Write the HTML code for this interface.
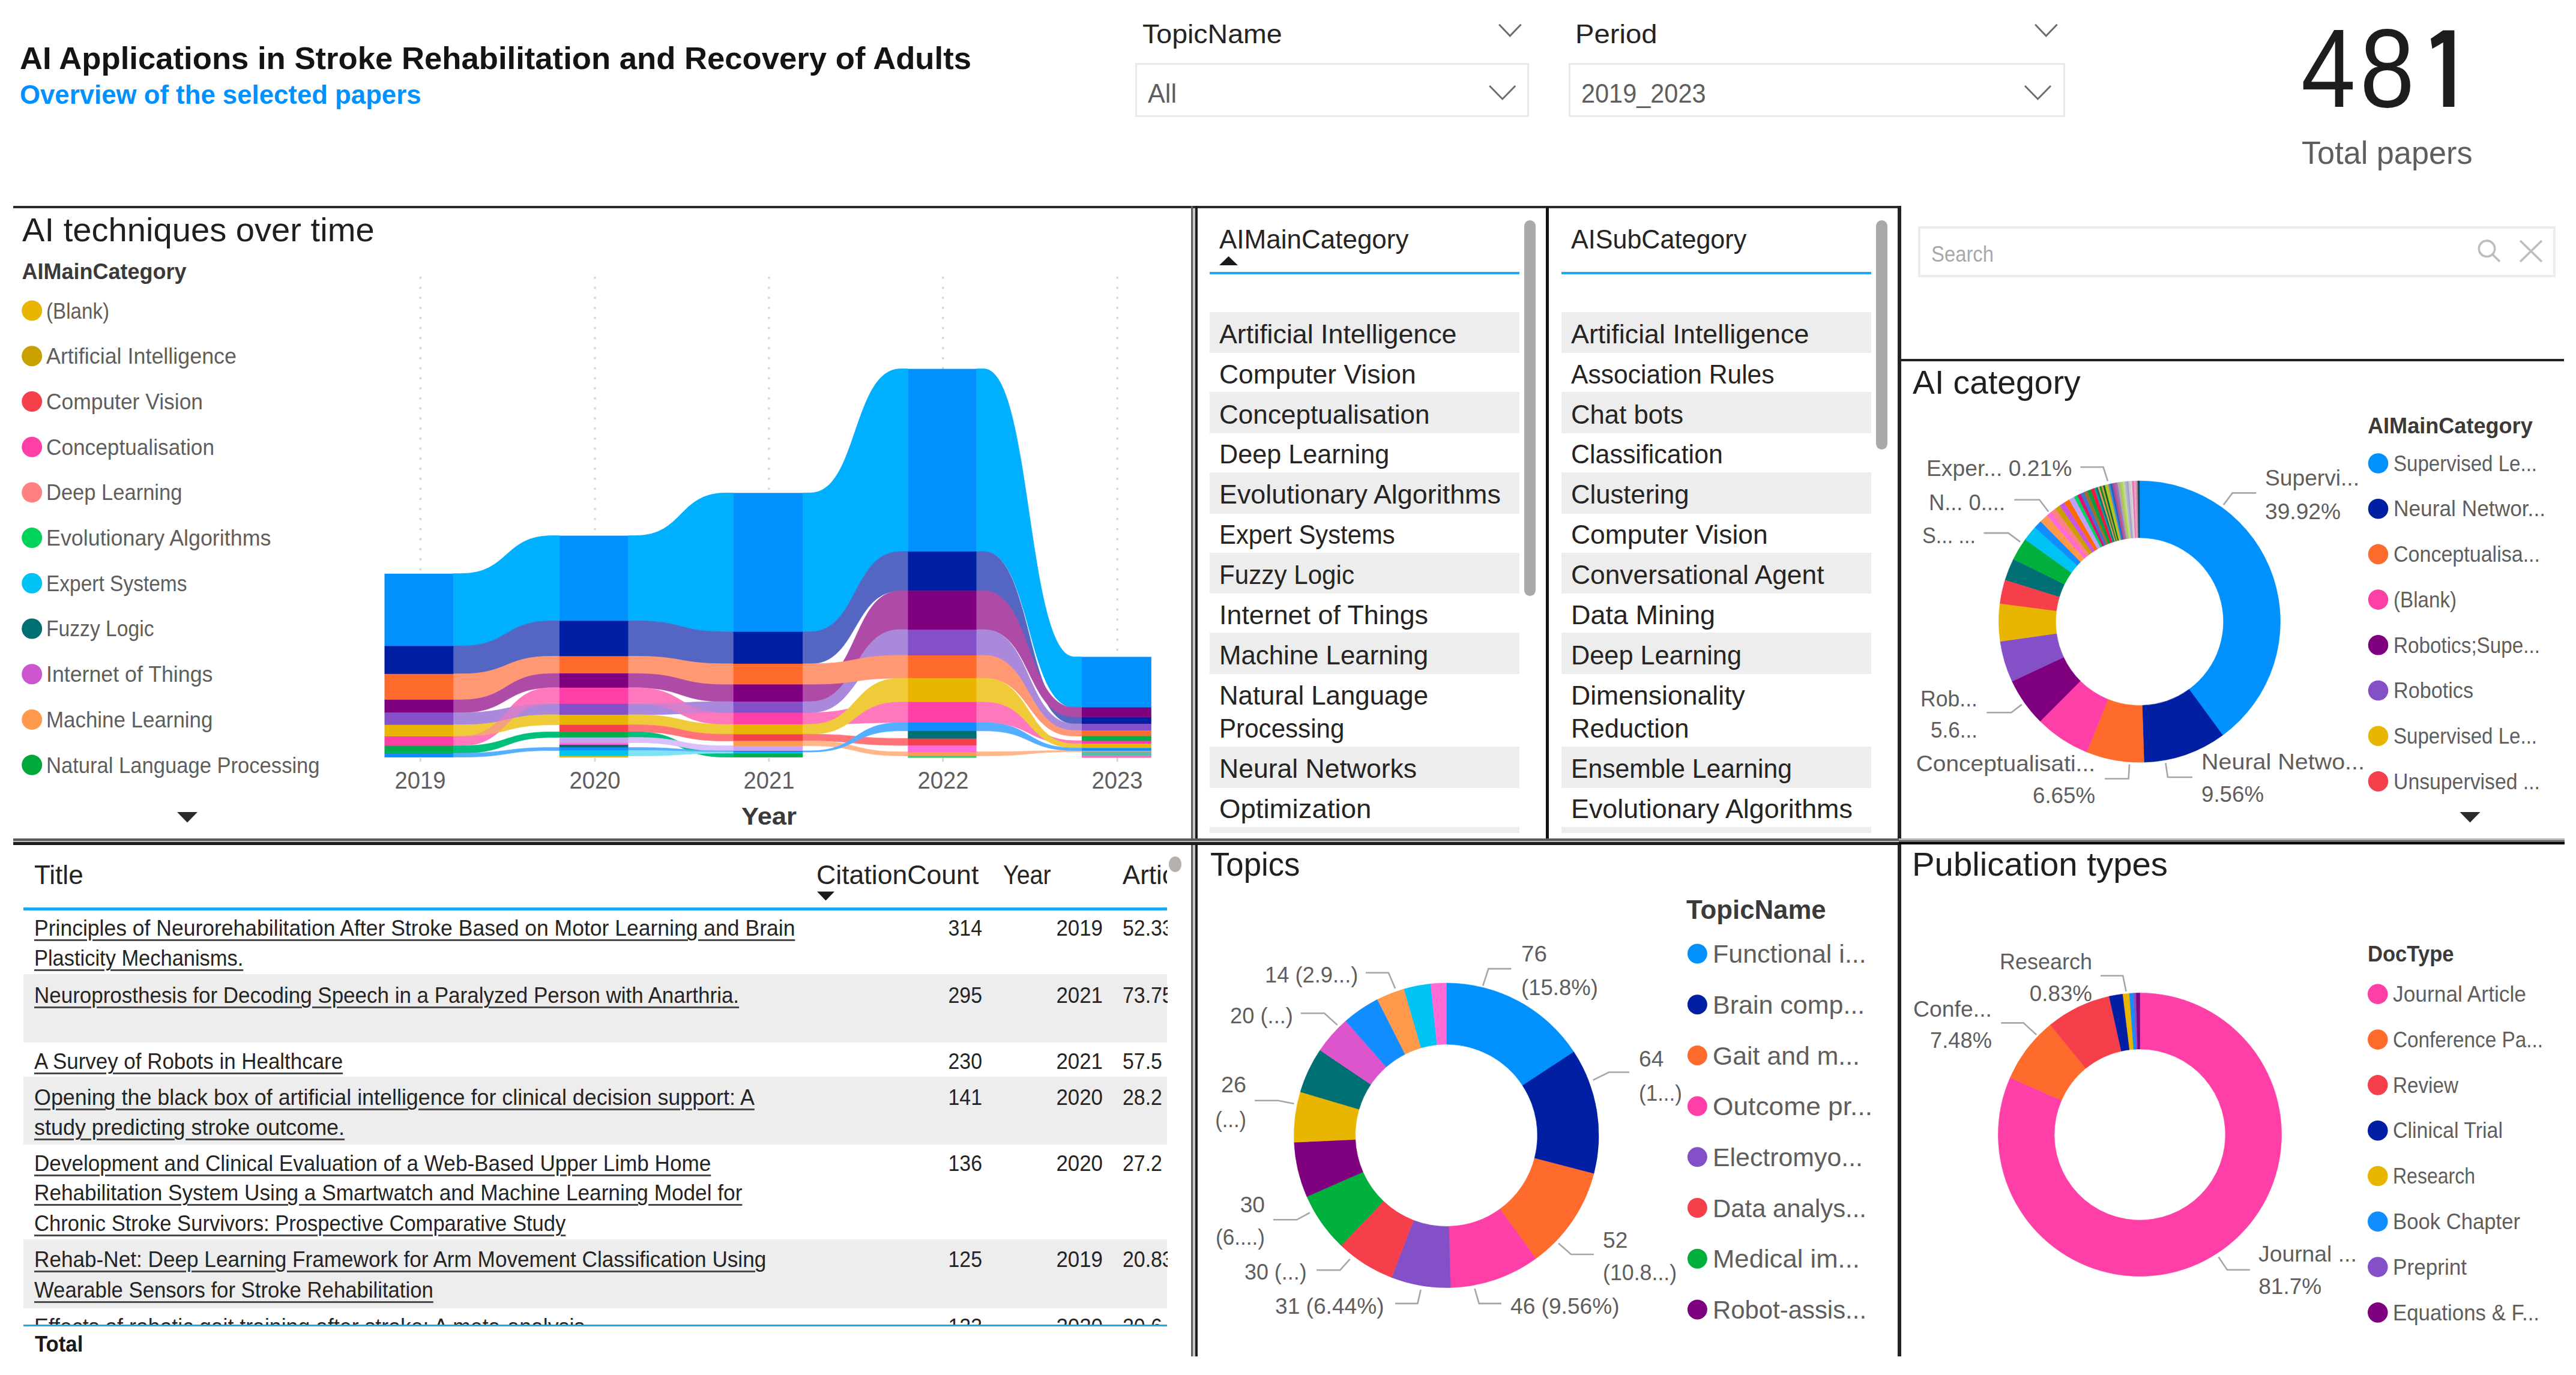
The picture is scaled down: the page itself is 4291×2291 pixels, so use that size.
<!DOCTYPE html>
<html><head><meta charset="utf-8"><title>AI Applications in Stroke Rehabilitation</title>
<style>
html,body{margin:0;padding:0;background:#fff;}
body{width:4291px;height:2291px;position:relative;overflow:hidden;font-family:"Liberation Sans",sans-serif;}
.t{position:absolute;white-space:nowrap;line-height:1;}
.r{position:absolute;}
svg{position:absolute;left:0;top:0;}
</style></head><body>
<svg width="4291" height="2291" viewBox="0 0 4291 2291">
<polyline points="2497.1,40.8 2515.3,59.8 2533.6,40.8" fill="none" stroke="#6e6c6a" stroke-width="2.9"/>
<polyline points="3390.1,40.8 3408.3,59.8 3426.6,40.8" fill="none" stroke="#6e6c6a" stroke-width="2.9"/>
<polyline points="2481.2,143.0 2502.7,165.0 2524.2,143.0" fill="none" stroke="#6e6c6a" stroke-width="2.9"/>
<polyline points="3373.0,143.0 3394.5,165.0 3416.0,143.0" fill="none" stroke="#6e6c6a" stroke-width="2.9"/>
<line x1="700.3" y1="461" x2="700.3" y2="1262" stroke="#d6d6d6" stroke-width="3.4" stroke-dasharray="3.4 13.35"/>
<line x1="700.3" y1="1263" x2="700.3" y2="1269" stroke="#d8d8d8" stroke-width="3"/>
<line x1="991" y1="461" x2="991" y2="1262" stroke="#d6d6d6" stroke-width="3.4" stroke-dasharray="3.4 13.35"/>
<line x1="991" y1="1263" x2="991" y2="1269" stroke="#d8d8d8" stroke-width="3"/>
<line x1="1280.9" y1="461" x2="1280.9" y2="1262" stroke="#d6d6d6" stroke-width="3.4" stroke-dasharray="3.4 13.35"/>
<line x1="1280.9" y1="1263" x2="1280.9" y2="1269" stroke="#d8d8d8" stroke-width="3"/>
<line x1="1570.7" y1="461" x2="1570.7" y2="1262" stroke="#d6d6d6" stroke-width="3.4" stroke-dasharray="3.4 13.35"/>
<line x1="1570.7" y1="1263" x2="1570.7" y2="1269" stroke="#d8d8d8" stroke-width="3"/>
<line x1="1861.2" y1="461" x2="1861.2" y2="1262" stroke="#d6d6d6" stroke-width="3.4" stroke-dasharray="3.4 13.35"/>
<line x1="1861.2" y1="1263" x2="1861.2" y2="1269" stroke="#d8d8d8" stroke-width="3"/>
<path d="M755.3,955.8 L767.7,955.8 C848.1,955.8 839.0,892.5 919.4,892.5 L931.8,892.5 L931.8,1034.4 L919.4,1034.4 C839.0,1034.4 848.1,1076.3 767.7,1076.3 L755.3,1076.3 Z" fill="#00B0FF" stroke="#00B0FF" stroke-width="0.8"/>
<path d="M1046.5,892.5 L1058.8,892.5 C1138.6,892.5 1129.5,821.3 1209.3,821.3 L1221.6,821.3 L1221.6,1052.7 L1209.3,1052.7 C1129.5,1052.7 1138.6,1034.4 1058.8,1034.4 L1046.5,1034.4 Z" fill="#00B0FF" stroke="#00B0FF" stroke-width="0.8"/>
<path d="M1337.2,821.3 L1349.5,821.3 C1429.3,821.3 1420.2,614.6 1500.0,614.6 L1512.3,614.6 L1512.3,918.9 L1500.0,918.9 C1420.2,918.9 1429.3,1052.7 1349.5,1052.7 L1337.2,1052.7 Z" fill="#00B0FF" stroke="#00B0FF" stroke-width="0.8"/>
<path d="M1626.6,614.6 L1638.9,614.6 C1718.8,614.6 1709.7,1094.4 1789.6,1094.4 L1801.9,1094.4 L1801.9,1178.7 L1789.6,1178.7 C1709.7,1178.7 1718.8,918.9 1638.9,918.9 L1626.6,918.9 Z" fill="#00B0FF" stroke="#00B0FF" stroke-width="0.8"/>
<path d="M755.3,1076.3 L767.7,1076.3 C848.1,1076.3 839.0,1034.4 919.4,1034.4 L931.8,1034.4 L931.8,1093.4 L919.4,1093.4 C839.0,1093.4 848.1,1122.8 767.7,1122.8 L755.3,1122.8 Z" fill="#5566C2" stroke="#5566C2" stroke-width="0.8"/>
<path d="M1046.5,1034.4 L1058.8,1034.4 C1138.6,1034.4 1129.5,1052.7 1209.3,1052.7 L1221.6,1052.7 L1221.6,1105.9 L1209.3,1105.9 C1129.5,1105.9 1138.6,1093.4 1058.8,1093.4 L1046.5,1093.4 Z" fill="#5566C2" stroke="#5566C2" stroke-width="0.8"/>
<path d="M1337.2,1052.7 L1349.5,1052.7 C1429.3,1052.7 1420.2,918.9 1500.0,918.9 L1512.3,918.9 L1512.3,984.4 L1500.0,984.4 C1420.2,984.4 1429.3,1105.9 1349.5,1105.9 L1337.2,1105.9 Z" fill="#5566C2" stroke="#5566C2" stroke-width="0.8"/>
<path d="M1626.6,918.9 L1638.9,918.9 C1718.8,918.9 1709.7,1194.4 1789.6,1194.4 L1801.9,1194.4 L1801.9,1206.1 L1789.6,1206.1 C1709.7,1206.1 1718.8,984.4 1638.9,984.4 L1626.6,984.4 Z" fill="#5566C2" stroke="#5566C2" stroke-width="0.8"/>
<path d="M755.3,1165.3 L767.7,1165.3 C848.1,1165.3 839.0,1121.6 919.4,1121.6 L931.8,1121.6 L931.8,1145.8 L919.4,1145.8 C839.0,1145.8 848.1,1187.4 767.7,1187.4 L755.3,1187.4 Z" fill="#AE4BA6" stroke="#AE4BA6" stroke-width="0.8"/>
<path d="M1046.5,1121.6 L1058.8,1121.6 C1138.6,1121.6 1129.5,1140.0 1209.3,1140.0 L1221.6,1140.0 L1221.6,1169.1 L1209.3,1169.1 C1129.5,1169.1 1138.6,1145.8 1058.8,1145.8 L1046.5,1145.8 Z" fill="#AE4BA6" stroke="#AE4BA6" stroke-width="0.8"/>
<path d="M1337.2,1140.0 L1349.5,1140.0 C1429.3,1140.0 1420.2,984.4 1500.0,984.4 L1512.3,984.4 L1512.3,1049.0 L1500.0,1049.0 C1420.2,1049.0 1429.3,1169.1 1349.5,1169.1 L1337.2,1169.1 Z" fill="#AE4BA6" stroke="#AE4BA6" stroke-width="0.8"/>
<path d="M1626.6,984.4 L1638.9,984.4 C1718.8,984.4 1709.7,1178.7 1789.6,1178.7 L1801.9,1178.7 L1801.9,1194.4 L1789.6,1194.4 C1709.7,1194.4 1718.8,1049.0 1638.9,1049.0 L1626.6,1049.0 Z" fill="#AE4BA6" stroke="#AE4BA6" stroke-width="0.8"/>
<path d="M755.3,1226.4 L767.7,1226.4 C848.1,1226.4 839.0,1145.8 919.4,1145.8 L931.8,1145.8 L931.8,1172.8 L919.4,1172.8 C839.0,1172.8 848.1,1242.6 767.7,1242.6 L755.3,1242.6 Z" fill="#FF78BE" stroke="#FF78BE" stroke-width="0.8"/>
<path d="M1046.5,1145.8 L1058.8,1145.8 C1138.6,1145.8 1129.5,1187.4 1209.3,1187.4 L1221.6,1187.4 L1221.6,1206.9 L1209.3,1206.9 C1129.5,1206.9 1138.6,1172.8 1058.8,1172.8 L1046.5,1172.8 Z" fill="#FF78BE" stroke="#FF78BE" stroke-width="0.8"/>
<path d="M1337.2,1187.4 L1349.5,1187.4 C1429.3,1187.4 1420.2,1169.1 1500.0,1169.1 L1512.3,1169.1 L1512.3,1204.0 L1500.0,1204.0 C1420.2,1204.0 1429.3,1206.9 1349.5,1206.9 L1337.2,1206.9 Z" fill="#FF78BE" stroke="#FF78BE" stroke-width="0.8"/>
<path d="M1626.6,1169.1 L1638.9,1169.1 C1718.8,1169.1 1709.7,1234.0 1789.6,1234.0 L1801.9,1234.0 L1801.9,1239.2 L1789.6,1239.2 C1709.7,1239.2 1718.8,1204.0 1638.9,1204.0 L1626.6,1204.0 Z" fill="#FF78BE" stroke="#FF78BE" stroke-width="0.8"/>
<path d="M755.3,1187.4 L767.7,1187.4 C848.1,1187.4 839.0,1172.8 919.4,1172.8 L931.8,1172.8 L931.8,1190.9 L919.4,1190.9 C839.0,1190.9 848.1,1207.7 767.7,1207.7 L755.3,1207.7 Z" fill="#AA88DC" stroke="#AA88DC" stroke-width="0.8"/>
<path d="M1046.5,1172.8 L1058.8,1172.8 C1138.6,1172.8 1129.5,1169.1 1209.3,1169.1 L1221.6,1169.1 L1221.6,1187.4 L1209.3,1187.4 C1129.5,1187.4 1138.6,1190.9 1058.8,1190.9 L1046.5,1190.9 Z" fill="#AA88DC" stroke="#AA88DC" stroke-width="0.8"/>
<path d="M1337.2,1169.1 L1349.5,1169.1 C1429.3,1169.1 1420.2,1049.0 1500.0,1049.0 L1512.3,1049.0 L1512.3,1092.0 L1500.0,1092.0 C1420.2,1092.0 1429.3,1187.4 1349.5,1187.4 L1337.2,1187.4 Z" fill="#AA88DC" stroke="#AA88DC" stroke-width="0.8"/>
<path d="M1626.6,1049.0 L1638.9,1049.0 C1718.8,1049.0 1709.7,1206.1 1789.6,1206.1 L1801.9,1206.1 L1801.9,1217.1 L1789.6,1217.1 C1709.7,1217.1 1718.8,1092.0 1638.9,1092.0 L1626.6,1092.0 Z" fill="#AA88DC" stroke="#AA88DC" stroke-width="0.8"/>
<path d="M755.3,1122.8 L767.7,1122.8 C848.1,1122.8 839.0,1093.4 919.4,1093.4 L931.8,1093.4 L931.8,1121.6 L919.4,1121.6 C839.0,1121.6 848.1,1165.3 767.7,1165.3 L755.3,1165.3 Z" fill="#FF9873" stroke="#FF9873" stroke-width="0.8"/>
<path d="M1046.5,1093.4 L1058.8,1093.4 C1138.6,1093.4 1129.5,1105.9 1209.3,1105.9 L1221.6,1105.9 L1221.6,1140.0 L1209.3,1140.0 C1129.5,1140.0 1138.6,1121.6 1058.8,1121.6 L1046.5,1121.6 Z" fill="#FF9873" stroke="#FF9873" stroke-width="0.8"/>
<path d="M1337.2,1105.9 L1349.5,1105.9 C1429.3,1105.9 1420.2,1092.0 1500.0,1092.0 L1512.3,1092.0 L1512.3,1129.9 L1500.0,1129.9 C1420.2,1129.9 1429.3,1140.0 1349.5,1140.0 L1337.2,1140.0 Z" fill="#FF9873" stroke="#FF9873" stroke-width="0.8"/>
<path d="M1626.6,1092.0 L1638.9,1092.0 C1718.8,1092.0 1709.7,1217.1 1789.6,1217.1 L1801.9,1217.1 L1801.9,1226.4 L1789.6,1226.4 C1709.7,1226.4 1718.8,1129.9 1638.9,1129.9 L1626.6,1129.9 Z" fill="#FF9873" stroke="#FF9873" stroke-width="0.8"/>
<path d="M755.3,1207.7 L767.7,1207.7 C848.1,1207.7 839.0,1190.9 919.4,1190.9 L931.8,1190.9 L931.8,1207.7 L919.4,1207.7 C839.0,1207.7 848.1,1226.4 767.7,1226.4 L755.3,1226.4 Z" fill="#EFCB3A" stroke="#EFCB3A" stroke-width="0.8"/>
<path d="M1046.5,1190.9 L1058.8,1190.9 C1138.6,1190.9 1129.5,1206.9 1209.3,1206.9 L1221.6,1206.9 L1221.6,1223.4 L1209.3,1223.4 C1129.5,1223.4 1138.6,1207.7 1058.8,1207.7 L1046.5,1207.7 Z" fill="#EFCB3A" stroke="#EFCB3A" stroke-width="0.8"/>
<path d="M1337.2,1206.9 L1349.5,1206.9 C1429.3,1206.9 1420.2,1129.9 1500.0,1129.9 L1512.3,1129.9 L1512.3,1169.1 L1500.0,1169.1 C1420.2,1169.1 1429.3,1223.4 1349.5,1223.4 L1337.2,1223.4 Z" fill="#EFCB3A" stroke="#EFCB3A" stroke-width="0.8"/>
<path d="M1626.6,1129.9 L1638.9,1129.9 C1718.8,1129.9 1709.7,1239.2 1789.6,1239.2 L1801.9,1239.2 L1801.9,1246.2 L1789.6,1246.2 C1709.7,1246.2 1718.8,1169.1 1638.9,1169.1 L1626.6,1169.1 Z" fill="#EFCB3A" stroke="#EFCB3A" stroke-width="0.8"/>
<path d="M1046.5,1207.7 L1058.8,1207.7 C1138.6,1207.7 1129.5,1223.4 1209.3,1223.4 L1221.6,1223.4 L1221.6,1234.5 L1209.3,1234.5 C1129.5,1234.5 1138.6,1219.4 1058.8,1219.4 L1046.5,1219.4 Z" fill="#FF7379" stroke="#FF7379" stroke-width="0.8"/>
<path d="M1337.2,1223.4 L1349.5,1223.4 C1429.3,1223.4 1420.2,1230.2 1500.0,1230.2 L1512.3,1230.2 L1512.3,1241.9 L1500.0,1241.9 C1420.2,1241.9 1429.3,1234.5 1349.5,1234.5 L1337.2,1234.5 Z" fill="#FF7379" stroke="#FF7379" stroke-width="0.8"/>
<path d="M755.3,1242.6 L767.7,1242.6 C848.1,1242.6 839.0,1219.4 919.4,1219.4 L931.8,1219.4 L931.8,1228.7 L919.4,1228.7 C839.0,1228.7 848.1,1254.9 767.7,1254.9 L755.3,1254.9 Z" fill="#00BF7A" stroke="#00BF7A" stroke-width="0.8"/>
<path d="M1046.5,1219.4 L1058.8,1219.4 C1138.6,1219.4 1129.5,1255.0 1209.3,1255.0 L1221.6,1255.0 L1221.6,1261.5 L1209.3,1261.5 C1129.5,1261.5 1138.6,1228.7 1058.8,1228.7 L1046.5,1228.7 Z" fill="#00BF7A" stroke="#00BF7A" stroke-width="0.8"/>
<path d="M1046.5,1228.7 L1058.8,1228.7 C1138.6,1228.7 1129.5,1242.6 1209.3,1242.6 L1221.6,1242.6 L1221.6,1251.0 L1209.3,1251.0 C1129.5,1251.0 1138.6,1237.4 1058.8,1237.4 L1046.5,1237.4 Z" fill="#D9C0FA" stroke="#D9C0FA" stroke-width="0.8"/>
<path d="M1337.2,1234.5 L1349.5,1234.5 C1429.3,1234.5 1420.2,1252.6 1500.0,1252.6 L1512.3,1252.6 L1512.3,1259.3 L1500.0,1259.3 C1420.2,1259.3 1429.3,1242.6 1349.5,1242.6 L1337.2,1242.6 Z" fill="#FFB68A" stroke="#FFB68A" stroke-width="0.8"/>
<path d="M1626.6,1252.6 L1638.9,1252.6 C1718.8,1252.6 1709.7,1250.5 1789.6,1250.5 L1801.9,1250.5 L1801.9,1252.6 L1789.6,1252.6 C1709.7,1252.6 1718.8,1259.3 1638.9,1259.3 L1626.6,1259.3 Z" fill="#FFB68A" stroke="#FFB68A" stroke-width="0.8"/>
<path d="M755.3,1254.9 L767.7,1254.9 C848.1,1254.9 839.0,1245.5 919.4,1245.5 L931.8,1245.5 L931.8,1250.5 L919.4,1250.5 C839.0,1250.5 848.1,1261.5 767.7,1261.5 L755.3,1261.5 Z" fill="#55AEFF" stroke="#55AEFF" stroke-width="0.8"/>
<path d="M1046.5,1245.5 L1058.8,1245.5 C1138.6,1245.5 1129.5,1251.0 1209.3,1251.0 L1221.6,1251.0 L1221.6,1253.0 L1209.3,1253.0 C1129.5,1253.0 1138.6,1250.5 1058.8,1250.5 L1046.5,1250.5 Z" fill="#55AEFF" stroke="#55AEFF" stroke-width="0.8"/>
<path d="M1337.2,1251.0 L1349.5,1251.0 C1429.3,1251.0 1420.2,1204.0 1500.0,1204.0 L1512.3,1204.0 L1512.3,1217.7 L1500.0,1217.7 C1420.2,1217.7 1429.3,1253.0 1349.5,1253.0 L1337.2,1253.0 Z" fill="#55AEFF" stroke="#55AEFF" stroke-width="0.8"/>
<path d="M1626.6,1204.0 L1638.9,1204.0 C1718.8,1204.0 1709.7,1246.2 1789.6,1246.2 L1801.9,1246.2 L1801.9,1250.5 L1789.6,1250.5 C1709.7,1250.5 1718.8,1217.7 1638.9,1217.7 L1626.6,1217.7 Z" fill="#55AEFF" stroke="#55AEFF" stroke-width="0.8"/>
<path d="M1046.5,1250.5 L1058.8,1250.5 C1138.6,1250.5 1129.5,1253.0 1209.3,1253.0 L1221.6,1253.0 L1221.6,1255.0 L1209.3,1255.0 C1129.5,1255.0 1138.6,1259.5 1058.8,1259.5 L1046.5,1259.5 Z" fill="#7FE3F7" stroke="#7FE3F7" stroke-width="0.8"/>
<path d="M755.3,1226.4 L767.7,1226.4 C848.1,1226.4 839.0,1145.8 919.4,1145.8 L931.8,1145.8 L931.8,1172.8 L919.4,1172.8 C839.0,1172.8 848.1,1242.6 767.7,1242.6 L755.3,1242.6 Z" fill="#FF78BE" fill-opacity="0.5"/>
<path d="M1046.5,1145.8 L1058.8,1145.8 C1138.6,1145.8 1129.5,1187.4 1209.3,1187.4 L1221.6,1187.4 L1221.6,1206.9 L1209.3,1206.9 C1129.5,1206.9 1138.6,1172.8 1058.8,1172.8 L1046.5,1172.8 Z" fill="#FF78BE" fill-opacity="0.5"/>
<rect x="640.5" y="955.8" width="114.8" height="120.9" fill="#0091FF"/>
<rect x="931.8" y="892.5" width="114.7" height="142.3" fill="#0091FF"/>
<rect x="1221.6" y="821.3" width="115.6" height="231.8" fill="#0091FF"/>
<rect x="1512.3" y="614.6" width="114.3" height="304.7" fill="#0091FF"/>
<rect x="1801.9" y="1094.4" width="115.9" height="84.7" fill="#0091FF"/>
<rect x="640.5" y="1076.3" width="114.8" height="46.9" fill="#001FA3"/>
<rect x="931.8" y="1034.4" width="114.7" height="59.4" fill="#001FA3"/>
<rect x="1221.6" y="1052.7" width="115.6" height="53.6" fill="#001FA3"/>
<rect x="1512.3" y="918.9" width="114.3" height="65.9" fill="#001FA3"/>
<rect x="1801.9" y="1194.4" width="115.9" height="12.1" fill="#001FA3"/>
<rect x="640.5" y="1165.3" width="114.8" height="22.5" fill="#7F007F"/>
<rect x="931.8" y="1121.6" width="114.7" height="24.6" fill="#7F007F"/>
<rect x="1221.6" y="1140.0" width="115.6" height="29.5" fill="#7F007F"/>
<rect x="1512.3" y="984.4" width="114.3" height="65.0" fill="#7F007F"/>
<rect x="1801.9" y="1178.7" width="115.9" height="16.1" fill="#7F007F"/>
<rect x="640.5" y="1226.4" width="114.8" height="16.6" fill="#FF3FA8"/>
<rect x="931.8" y="1145.8" width="114.7" height="27.4" fill="#FF3FA8"/>
<rect x="1221.6" y="1187.4" width="115.6" height="19.9" fill="#FF3FA8"/>
<rect x="1512.3" y="1169.1" width="114.3" height="35.3" fill="#FF3FA8"/>
<rect x="1801.9" y="1234.0" width="115.9" height="5.6" fill="#FF3FA8"/>
<rect x="640.5" y="1187.4" width="114.8" height="20.7" fill="#8350C8"/>
<rect x="931.8" y="1172.8" width="114.7" height="18.5" fill="#8350C8"/>
<rect x="1221.6" y="1169.1" width="115.6" height="18.7" fill="#8350C8"/>
<rect x="1512.3" y="1049.0" width="114.3" height="43.4" fill="#8350C8"/>
<rect x="1801.9" y="1206.1" width="115.9" height="11.4" fill="#8350C8"/>
<rect x="640.5" y="1122.8" width="114.8" height="42.9" fill="#FF6B2C"/>
<rect x="931.8" y="1093.4" width="114.7" height="28.6" fill="#FF6B2C"/>
<rect x="1221.6" y="1105.9" width="115.6" height="34.5" fill="#FF6B2C"/>
<rect x="1512.3" y="1092.0" width="114.3" height="38.3" fill="#FF6B2C"/>
<rect x="1801.9" y="1217.1" width="115.9" height="9.7" fill="#FF6B2C"/>
<rect x="640.5" y="1207.7" width="114.8" height="19.1" fill="#E8B600"/>
<rect x="931.8" y="1190.9" width="114.7" height="17.2" fill="#E8B600"/>
<rect x="1221.6" y="1206.9" width="115.6" height="16.9" fill="#E8B600"/>
<rect x="1512.3" y="1129.9" width="114.3" height="39.6" fill="#E8B600"/>
<rect x="1801.9" y="1239.2" width="115.9" height="7.4" fill="#E8B600"/>
<rect x="931.8" y="1207.7" width="114.7" height="12.1" fill="#F5404B"/>
<rect x="1221.6" y="1223.4" width="115.6" height="11.5" fill="#F5404B"/>
<rect x="1512.3" y="1230.2" width="114.3" height="12.1" fill="#F5404B"/>
<rect x="640.5" y="1242.6" width="114.8" height="12.7" fill="#00AF4B"/>
<rect x="931.8" y="1219.4" width="114.7" height="9.7" fill="#00AF4B"/>
<rect x="1221.6" y="1255.0" width="115.6" height="6.9" fill="#00AF4B"/>
<rect x="1801.9" y="1226.4" width="115.9" height="8.0" fill="#00AF4B"/>
<rect x="931.8" y="1228.7" width="114.7" height="9.1" fill="#C9A6F5"/>
<rect x="1221.6" y="1242.6" width="115.6" height="8.8" fill="#C9A6F5"/>
<rect x="1221.6" y="1234.5" width="115.6" height="8.5" fill="#FF9A55"/>
<rect x="1512.3" y="1252.6" width="114.3" height="7.1" fill="#FF9A55"/>
<rect x="1801.9" y="1250.5" width="115.9" height="2.5" fill="#FF9A55"/>
<rect x="931.8" y="1237.4" width="114.7" height="3.9" fill="#FF6AD5"/>
<rect x="1512.3" y="1241.9" width="114.3" height="11.1" fill="#FF6AD5"/>
<rect x="931.8" y="1240.9" width="114.7" height="5.0" fill="#006F73"/>
<rect x="1512.3" y="1217.7" width="114.3" height="12.9" fill="#006F73"/>
<rect x="640.5" y="1254.9" width="114.8" height="7.0" fill="#118DFF"/>
<rect x="931.8" y="1245.5" width="114.7" height="5.4" fill="#118DFF"/>
<rect x="1221.6" y="1251.0" width="115.6" height="2.4" fill="#118DFF"/>
<rect x="1512.3" y="1204.0" width="114.3" height="14.1" fill="#118DFF"/>
<rect x="1801.9" y="1246.2" width="115.9" height="4.7" fill="#118DFF"/>
<rect x="931.8" y="1250.5" width="114.7" height="9.4" fill="#00C3E8"/>
<rect x="1221.6" y="1253.0" width="115.6" height="2.4" fill="#00C3E8"/>
<rect x="931.8" y="1259.5" width="114.7" height="2.7" fill="#E8B600"/>
<rect x="1801.9" y="1252.6" width="115.9" height="7.1" fill="#5ABAB0"/>
<rect x="1512.3" y="1259.3" width="114.3" height="3.3" fill="#3fca6a"/>
<rect x="1801.9" y="1259.3" width="115.9" height="3.3" fill="#FF6AB5"/>
<circle cx="53.2" cy="517.6" r="17" fill="#E8B600"/>
<circle cx="53.2" cy="593.3" r="17" fill="#C9A000"/>
<circle cx="53.2" cy="669.0" r="17" fill="#F5404B"/>
<circle cx="53.2" cy="744.7" r="17" fill="#FF3FA8"/>
<circle cx="53.2" cy="820.4" r="17" fill="#FF8080"/>
<circle cx="53.2" cy="896.1" r="17" fill="#00D25A"/>
<circle cx="53.2" cy="971.8" r="17" fill="#00C3F5"/>
<circle cx="53.2" cy="1047.5" r="17" fill="#006F73"/>
<circle cx="53.2" cy="1123.2" r="17" fill="#CC55D0"/>
<circle cx="53.2" cy="1198.9" r="17" fill="#FF9A4D"/>
<circle cx="53.2" cy="1274.6" r="17" fill="#00A83C"/>
<polygon points="295,1353 329,1353 312,1370.5" fill="#2b2b2b"/>
<polygon points="2031,442 2062,442 2046.5,427" fill="#1a1a1a"/>
<circle cx="4142.5" cy="414.3" r="13.2" fill="none" stroke="#bdbdbd" stroke-width="3.6"/>
<line x1="4152" y1="424" x2="4164" y2="435.8" stroke="#bdbdbd" stroke-width="3.6"/>
<path d="M4198,401 L4234,436 M4234,401 L4198,436" stroke="#bdbdbd" stroke-width="3.6" fill="none"/>
<path d="M3564.00,801.20 A234.5,234.5 0 0 1 3702.50,1224.93 L3646.51,1148.43 A139.7,139.7 0 0 0 3564.00,896.00 Z" fill="#0091FF" stroke="#0091FF" stroke-width="0.6"/>
<path d="M3702.50,1224.93 A234.5,234.5 0 0 1 3571.37,1270.08 L3568.39,1175.33 A139.7,139.7 0 0 0 3646.51,1148.43 Z" fill="#001FA3" stroke="#001FA3" stroke-width="0.6"/>
<path d="M3571.37,1270.08 A234.5,234.5 0 0 1 3475.78,1252.97 L3511.44,1165.14 A139.7,139.7 0 0 0 3568.39,1175.33 Z" fill="#FF6B2C" stroke="#FF6B2C" stroke-width="0.6"/>
<path d="M3475.78,1252.97 A234.5,234.5 0 0 1 3398.47,1201.81 L3465.39,1134.66 A139.7,139.7 0 0 0 3511.44,1165.14 Z" fill="#FF3FA8" stroke="#FF3FA8" stroke-width="0.6"/>
<path d="M3398.47,1201.81 A234.5,234.5 0 0 1 3351.64,1135.17 L3437.49,1094.96 A139.7,139.7 0 0 0 3465.39,1134.66 Z" fill="#7F007F" stroke="#7F007F" stroke-width="0.6"/>
<path d="M3351.64,1135.17 A234.5,234.5 0 0 1 3331.84,1068.74 L3425.69,1055.38 A139.7,139.7 0 0 0 3437.49,1094.96 Z" fill="#8350C8" stroke="#8350C8" stroke-width="0.6"/>
<path d="M3331.84,1068.74 A234.5,234.5 0 0 1 3331.45,1005.50 L3425.46,1017.71 A139.7,139.7 0 0 0 3425.69,1055.38 Z" fill="#E8B600" stroke="#E8B600" stroke-width="0.6"/>
<path d="M3331.45,1005.50 A234.5,234.5 0 0 1 3340.11,965.97 L3430.62,994.16 A139.7,139.7 0 0 0 3425.46,1017.71 Z" fill="#F5404B" stroke="#F5404B" stroke-width="0.6"/>
<path d="M3340.11,965.97 A234.5,234.5 0 0 1 3353.96,931.43 L3438.87,973.58 A139.7,139.7 0 0 0 3430.62,994.16 Z" fill="#006F73" stroke="#006F73" stroke-width="0.6"/>
<path d="M3353.96,931.43 A234.5,234.5 0 0 1 3373.57,898.86 L3450.55,954.18 A139.7,139.7 0 0 0 3438.87,973.58 Z" fill="#00AF3C" stroke="#00AF3C" stroke-width="0.6"/>
<path d="M3373.57,898.86 A234.5,234.5 0 0 1 3389.73,878.79 L3460.18,942.22 A139.7,139.7 0 0 0 3450.55,954.18 Z" fill="#00C3F5" stroke="#00C3F5" stroke-width="0.6"/>
<path d="M3389.73,878.79 A234.5,234.5 0 0 1 3399.35,868.73 L3465.91,936.23 A139.7,139.7 0 0 0 3460.18,942.22 Z" fill="#118DFF" stroke="#118DFF" stroke-width="0.6"/>
<path d="M3399.35,868.73 A234.5,234.5 0 0 1 3409.54,859.26 L3471.98,930.59 A139.7,139.7 0 0 0 3465.91,936.23 Z" fill="#FF9A4D" stroke="#FF9A4D" stroke-width="0.6"/>
<path d="M3409.54,859.26 A234.5,234.5 0 0 1 3416.57,853.34 L3476.17,927.06 A139.7,139.7 0 0 0 3471.98,930.59 Z" fill="#FF6AD5" stroke="#FF6AD5" stroke-width="0.6"/>
<path d="M3416.57,853.34 A234.5,234.5 0 0 1 3423.84,847.70 L3480.50,923.70 A139.7,139.7 0 0 0 3476.17,927.06 Z" fill="#FF8080" stroke="#FF8080" stroke-width="0.6"/>
<path d="M3423.84,847.70 A234.5,234.5 0 0 1 3431.32,842.35 L3484.96,920.51 A139.7,139.7 0 0 0 3480.50,923.70 Z" fill="#C9A000" stroke="#C9A000" stroke-width="0.6"/>
<path d="M3431.32,842.35 A234.5,234.5 0 0 1 3439.00,837.29 L3489.53,917.50 A139.7,139.7 0 0 0 3484.96,920.51 Z" fill="#CC55E0" stroke="#CC55E0" stroke-width="0.6"/>
<path d="M3439.00,837.29 A234.5,234.5 0 0 1 3446.88,832.54 L3494.23,914.67 A139.7,139.7 0 0 0 3489.53,917.50 Z" fill="#FF6B00" stroke="#FF6B00" stroke-width="0.6"/>
<path d="M3446.88,832.54 A234.5,234.5 0 0 1 3454.94,828.11 L3499.03,912.03 A139.7,139.7 0 0 0 3494.23,914.67 Z" fill="#C0A0FF" stroke="#C0A0FF" stroke-width="0.6"/>
<path d="M3454.94,828.11 A234.5,234.5 0 0 1 3460.40,825.33 L3502.28,910.37 A139.7,139.7 0 0 0 3499.03,912.03 Z" fill="#00D060" stroke="#00D060" stroke-width="0.6"/>
<path d="M3460.40,825.33 A234.5,234.5 0 0 1 3465.94,822.69 L3505.58,908.80 A139.7,139.7 0 0 0 3502.28,910.37 Z" fill="#E01070" stroke="#E01070" stroke-width="0.6"/>
<path d="M3465.94,822.69 A234.5,234.5 0 0 1 3471.54,820.20 L3508.92,907.32 A139.7,139.7 0 0 0 3505.58,908.80 Z" fill="#4070D0" stroke="#4070D0" stroke-width="0.6"/>
<path d="M3471.54,820.20 A234.5,234.5 0 0 1 3477.20,817.85 L3512.29,905.92 A139.7,139.7 0 0 0 3508.92,907.32 Z" fill="#9A7030" stroke="#9A7030" stroke-width="0.6"/>
<path d="M3477.20,817.85 A234.5,234.5 0 0 1 3482.93,815.66 L3515.70,904.61 A139.7,139.7 0 0 0 3512.29,905.92 Z" fill="#00A040" stroke="#00A040" stroke-width="0.6"/>
<path d="M3482.93,815.66 A234.5,234.5 0 0 1 3488.71,813.62 L3519.15,903.40 A139.7,139.7 0 0 0 3515.70,904.61 Z" fill="#FF1040" stroke="#FF1040" stroke-width="0.6"/>
<path d="M3488.71,813.62 A234.5,234.5 0 0 1 3491.62,812.65 L3520.88,902.82 A139.7,139.7 0 0 0 3519.15,903.40 Z" fill="#00A0A0" stroke="#00A0A0" stroke-width="0.6"/>
<path d="M3491.62,812.65 A234.5,234.5 0 0 1 3494.54,811.72 L3522.62,902.27 A139.7,139.7 0 0 0 3520.88,902.82 Z" fill="#0A6A6A" stroke="#0A6A6A" stroke-width="0.6"/>
<path d="M3494.54,811.72 A234.5,234.5 0 0 1 3497.48,810.83 L3524.37,901.74 A139.7,139.7 0 0 0 3522.62,902.27 Z" fill="#E0A050" stroke="#E0A050" stroke-width="0.6"/>
<path d="M3497.48,810.83 A234.5,234.5 0 0 1 3500.42,809.98 L3526.12,901.23 A139.7,139.7 0 0 0 3524.37,901.74 Z" fill="#108040" stroke="#108040" stroke-width="0.6"/>
<path d="M3500.42,809.98 A234.5,234.5 0 0 1 3503.38,809.17 L3527.89,900.75 A139.7,139.7 0 0 0 3526.12,901.23 Z" fill="#C8A030" stroke="#C8A030" stroke-width="0.6"/>
<path d="M3503.38,809.17 A234.5,234.5 0 0 1 3506.35,808.40 L3529.65,900.29 A139.7,139.7 0 0 0 3527.89,900.75 Z" fill="#0A5A30" stroke="#0A5A30" stroke-width="0.6"/>
<path d="M3506.35,808.40 A234.5,234.5 0 0 1 3509.32,807.66 L3531.43,899.85 A139.7,139.7 0 0 0 3529.65,900.29 Z" fill="#A0D020" stroke="#A0D020" stroke-width="0.6"/>
<path d="M3509.32,807.66 A234.5,234.5 0 0 1 3512.31,806.97 L3533.21,899.44 A139.7,139.7 0 0 0 3531.43,899.85 Z" fill="#D0B020" stroke="#D0B020" stroke-width="0.6"/>
<path d="M3512.31,806.97 A234.5,234.5 0 0 1 3515.30,806.31 L3534.99,899.05 A139.7,139.7 0 0 0 3533.21,899.44 Z" fill="#3090E0" stroke="#3090E0" stroke-width="0.6"/>
<path d="M3515.30,806.31 A234.5,234.5 0 0 1 3518.31,805.69 L3536.78,898.68 A139.7,139.7 0 0 0 3534.99,899.05 Z" fill="#2060B0" stroke="#2060B0" stroke-width="0.6"/>
<path d="M3518.31,805.69 A234.5,234.5 0 0 1 3521.32,805.12 L3538.57,898.33 A139.7,139.7 0 0 0 3536.78,898.68 Z" fill="#9050B0" stroke="#9050B0" stroke-width="0.6"/>
<path d="M3521.32,805.12 A234.5,234.5 0 0 1 3524.34,804.58 L3540.37,898.01 A139.7,139.7 0 0 0 3538.57,898.33 Z" fill="#D05080" stroke="#D05080" stroke-width="0.6"/>
<path d="M3524.34,804.58 A234.5,234.5 0 0 1 3527.36,804.08 L3542.17,897.72 A139.7,139.7 0 0 0 3540.37,898.01 Z" fill="#8080C0" stroke="#8080C0" stroke-width="0.6"/>
<path d="M3527.36,804.08 A234.5,234.5 0 0 1 3530.39,803.62 L3543.98,897.44 A139.7,139.7 0 0 0 3542.17,897.72 Z" fill="#C0A0B0" stroke="#C0A0B0" stroke-width="0.6"/>
<path d="M3530.39,803.62 A234.5,234.5 0 0 1 3533.43,803.20 L3545.79,897.19 A139.7,139.7 0 0 0 3543.98,897.44 Z" fill="#A8C850" stroke="#A8C850" stroke-width="0.6"/>
<path d="M3533.43,803.20 A234.5,234.5 0 0 1 3536.47,802.82 L3547.60,896.97 A139.7,139.7 0 0 0 3545.79,897.19 Z" fill="#B0D860" stroke="#B0D860" stroke-width="0.6"/>
<path d="M3536.47,802.82 A234.5,234.5 0 0 1 3539.52,802.48 L3549.42,896.76 A139.7,139.7 0 0 0 3547.60,896.97 Z" fill="#C8D890" stroke="#C8D890" stroke-width="0.6"/>
<path d="M3539.52,802.48 A234.5,234.5 0 0 1 3542.57,802.18 L3551.23,896.58 A139.7,139.7 0 0 0 3549.42,896.76 Z" fill="#B0B0E0" stroke="#B0B0E0" stroke-width="0.6"/>
<path d="M3542.57,802.18 A234.5,234.5 0 0 1 3545.62,801.92 L3553.05,896.43 A139.7,139.7 0 0 0 3551.23,896.58 Z" fill="#A0A0C0" stroke="#A0A0C0" stroke-width="0.6"/>
<path d="M3545.62,801.92 A234.5,234.5 0 0 1 3548.68,801.70 L3554.87,896.30 A139.7,139.7 0 0 0 3553.05,896.43 Z" fill="#C8C8C8" stroke="#C8C8C8" stroke-width="0.6"/>
<path d="M3548.68,801.70 A234.5,234.5 0 0 1 3551.74,801.52 L3556.70,896.19 A139.7,139.7 0 0 0 3554.87,896.30 Z" fill="#D8D0E0" stroke="#D8D0E0" stroke-width="0.6"/>
<path d="M3551.74,801.52 A234.5,234.5 0 0 1 3554.80,801.38 L3558.52,896.11 A139.7,139.7 0 0 0 3556.70,896.19 Z" fill="#E870B0" stroke="#E870B0" stroke-width="0.6"/>
<path d="M3554.80,801.38 A234.5,234.5 0 0 1 3557.87,801.28 L3560.35,896.05 A139.7,139.7 0 0 0 3558.52,896.11 Z" fill="#F0A0C8" stroke="#F0A0C8" stroke-width="0.6"/>
<path d="M3557.87,801.28 A234.5,234.5 0 0 1 3560.93,801.22 L3562.17,896.01 A139.7,139.7 0 0 0 3560.35,896.05 Z" fill="#C090B0" stroke="#C090B0" stroke-width="0.6"/>
<path d="M3560.93,801.22 A234.5,234.5 0 0 1 3564.00,801.20 L3564.00,896.00 A139.7,139.7 0 0 0 3562.17,896.01 Z" fill="#1a4a55" stroke="#1a4a55" stroke-width="0.6"/>
<polyline points="3465.5,778.3 3503.6,778.3 3511.0,801.6" fill="none" stroke="#a6a6a6" stroke-width="2.6"/>
<polyline points="3355.3,832.7 3397.3,832.7 3412.2,852.5" fill="none" stroke="#a6a6a6" stroke-width="2.6"/>
<polyline points="3304.4,888.1 3345.4,888.1 3365.2,902.9" fill="none" stroke="#a6a6a6" stroke-width="2.6"/>
<polyline points="3309.3,1187.2 3350.4,1187.2 3367.7,1173.9" fill="none" stroke="#a6a6a6" stroke-width="2.6"/>
<polyline points="3506.1,1297.5 3545.6,1297.5 3547.1,1273.7" fill="none" stroke="#a6a6a6" stroke-width="2.6"/>
<polyline points="3651.9,1295.0 3610.9,1295.0 3607.4,1271.3" fill="none" stroke="#a6a6a6" stroke-width="2.6"/>
<polyline points="3758.2,821.4 3718.7,821.4 3703.9,841.1" fill="none" stroke="#a6a6a6" stroke-width="2.6"/>
<circle cx="3961.5" cy="772.0" r="16.8" fill="#0091FF"/>
<circle cx="3961.5" cy="847.7" r="16.8" fill="#001FA3"/>
<circle cx="3961.5" cy="923.4" r="16.8" fill="#FF6B2C"/>
<circle cx="3961.5" cy="999.1" r="16.8" fill="#FF3FA8"/>
<circle cx="3961.5" cy="1074.8" r="16.8" fill="#7F007F"/>
<circle cx="3961.5" cy="1150.5" r="16.8" fill="#8350C8"/>
<circle cx="3961.5" cy="1226.2" r="16.8" fill="#E8B600"/>
<circle cx="3961.5" cy="1301.9" r="16.8" fill="#F5404B"/>
<polygon points="4097.5,1353 4131.5,1353 4114.5,1370.5" fill="#2b2b2b"/>
<polygon points="1361,1485.5 1390,1485.5 1375.5,1500.5" fill="#1a1a1a"/>
<path d="M2409.30,1637.90 A253.8,253.8 0 0 1 2621.67,1752.73 L2536.24,1808.63 A151.7,151.7 0 0 0 2409.30,1740.00 Z" fill="#0091FF" stroke="#0091FF" stroke-width="0.6"/>
<path d="M2621.67,1752.73 A253.8,253.8 0 0 1 2654.90,1955.68 L2556.10,1929.94 A151.7,151.7 0 0 0 2536.24,1808.63 Z" fill="#001FA3" stroke="#001FA3" stroke-width="0.6"/>
<path d="M2654.90,1955.68 A253.8,253.8 0 0 1 2558.48,2097.03 L2498.47,2014.43 A151.7,151.7 0 0 0 2556.10,1929.94 Z" fill="#FF6B2C" stroke="#FF6B2C" stroke-width="0.6"/>
<path d="M2558.48,2097.03 A253.8,253.8 0 0 1 2416.39,2145.40 L2413.54,2043.34 A151.7,151.7 0 0 0 2498.47,2014.43 Z" fill="#FF3FA8" stroke="#FF3FA8" stroke-width="0.6"/>
<path d="M2416.39,2145.40 A253.8,253.8 0 0 1 2317.93,2128.48 L2354.69,2033.23 A151.7,151.7 0 0 0 2413.54,2043.34 Z" fill="#8350C8" stroke="#8350C8" stroke-width="0.6"/>
<path d="M2317.93,2128.48 A253.8,253.8 0 0 1 2233.95,2075.19 L2304.49,2001.37 A151.7,151.7 0 0 0 2354.69,2033.23 Z" fill="#F5404B" stroke="#F5404B" stroke-width="0.6"/>
<path d="M2233.95,2075.19 A253.8,253.8 0 0 1 2176.90,1993.71 L2270.39,1952.68 A151.7,151.7 0 0 0 2304.49,2001.37 Z" fill="#00AF3C" stroke="#00AF3C" stroke-width="0.6"/>
<path d="M2176.90,1993.71 A253.8,253.8 0 0 1 2155.76,1903.21 L2257.76,1898.58 A151.7,151.7 0 0 0 2270.39,1952.68 Z" fill="#7F007F" stroke="#7F007F" stroke-width="0.6"/>
<path d="M2155.76,1903.21 A253.8,253.8 0 0 1 2166.08,1819.19 L2263.92,1848.36 A151.7,151.7 0 0 0 2257.76,1898.58 Z" fill="#E8B600" stroke="#E8B600" stroke-width="0.6"/>
<path d="M2166.08,1819.19 A253.8,253.8 0 0 1 2198.89,1749.78 L2283.54,1806.87 A151.7,151.7 0 0 0 2263.92,1848.36 Z" fill="#006F73" stroke="#006F73" stroke-width="0.6"/>
<path d="M2198.89,1749.78 A253.8,253.8 0 0 1 2241.79,1701.03 L2309.18,1777.73 A151.7,151.7 0 0 0 2283.54,1806.87 Z" fill="#DD55CC" stroke="#DD55CC" stroke-width="0.6"/>
<path d="M2241.79,1701.03 A253.8,253.8 0 0 1 2294.47,1665.36 L2340.67,1756.41 A151.7,151.7 0 0 0 2309.18,1777.73 Z" fill="#118DFF" stroke="#118DFF" stroke-width="0.6"/>
<path d="M2294.47,1665.36 A253.8,253.8 0 0 1 2338.92,1647.85 L2367.23,1745.95 A151.7,151.7 0 0 0 2340.67,1756.41 Z" fill="#FF9A4D" stroke="#FF9A4D" stroke-width="0.6"/>
<path d="M2338.92,1647.85 A253.8,253.8 0 0 1 2383.21,1639.24 L2393.71,1740.80 A151.7,151.7 0 0 0 2367.23,1745.95 Z" fill="#00C3F5" stroke="#00C3F5" stroke-width="0.6"/>
<path d="M2383.21,1639.24 A253.8,253.8 0 0 1 2409.30,1637.90 L2409.30,1740.00 A151.7,151.7 0 0 0 2393.71,1740.80 Z" fill="#FF6AD5" stroke="#FF6AD5" stroke-width="0.6"/>
<polyline points="2517.4,1614.1 2479.4,1614.1 2470.2,1642.3" fill="none" stroke="#a6a6a6" stroke-width="2.6"/>
<polyline points="2714.0,1786.5 2680.0,1786.5 2653.7,1799.6" fill="none" stroke="#a6a6a6" stroke-width="2.6"/>
<polyline points="2655.0,2090.0 2617.0,2090.0 2596.0,2071.6" fill="none" stroke="#a6a6a6" stroke-width="2.6"/>
<polyline points="2501.0,2171.9 2463.7,2171.9 2456.5,2147.0" fill="none" stroke="#a6a6a6" stroke-width="2.6"/>
<polyline points="2324.0,2171.9 2361.4,2171.9 2366.7,2149.0" fill="none" stroke="#a6a6a6" stroke-width="2.6"/>
<polyline points="2193.0,2116.2 2232.3,2116.2 2248.7,2097.8" fill="none" stroke="#a6a6a6" stroke-width="2.6"/>
<polyline points="2120.9,2032.3 2160.2,2032.3 2181.9,2020.5" fill="none" stroke="#a6a6a6" stroke-width="2.6"/>
<polyline points="2090.1,1833.7 2129.4,1833.7 2155.6,1839.0" fill="none" stroke="#a6a6a6" stroke-width="2.6"/>
<polyline points="2166.8,1688.2 2206.1,1688.2 2227.7,1707.9" fill="none" stroke="#a6a6a6" stroke-width="2.6"/>
<polyline points="2274.9,1620.7 2312.9,1620.7 2324.1,1646.9" fill="none" stroke="#a6a6a6" stroke-width="2.6"/>
<circle cx="2827.4" cy="1589.0" r="16.5" fill="#0091FF"/>
<circle cx="2827.4" cy="1673.7" r="16.5" fill="#001FA3"/>
<circle cx="2827.4" cy="1758.4" r="16.5" fill="#FF6B2C"/>
<circle cx="2827.4" cy="1843.1" r="16.5" fill="#FF3FA8"/>
<circle cx="2827.4" cy="1927.8" r="16.5" fill="#8350C8"/>
<circle cx="2827.4" cy="2012.5" r="16.5" fill="#F5404B"/>
<circle cx="2827.4" cy="2097.2" r="16.5" fill="#00AF3C"/>
<circle cx="2827.4" cy="2181.9" r="16.5" fill="#7F007F"/>
<path d="M3564.50,1654.50 A236,236 0 1 1 3348.40,1795.64 L3434.02,1833.22 A142.5,142.5 0 1 0 3564.50,1748.00 Z" fill="#FF3FA8" stroke="#FF3FA8" stroke-width="0.6"/>
<path d="M3348.40,1795.64 A236,236 0 0 1 3415.34,1707.61 L3474.44,1780.07 A142.5,142.5 0 0 0 3434.02,1833.22 Z" fill="#FF6B2C" stroke="#FF6B2C" stroke-width="0.6"/>
<path d="M3415.34,1707.61 A236,236 0 0 1 3513.42,1660.09 L3533.66,1751.38 A142.5,142.5 0 0 0 3474.44,1780.07 Z" fill="#F5404B" stroke="#F5404B" stroke-width="0.6"/>
<path d="M3513.42,1660.09 A236,236 0 0 1 3536.15,1656.21 L3547.38,1749.03 A142.5,142.5 0 0 0 3533.66,1751.38 Z" fill="#001FA3" stroke="#001FA3" stroke-width="0.6"/>
<path d="M3536.15,1656.21 A236,236 0 0 1 3547.22,1655.13 L3554.06,1748.38 A142.5,142.5 0 0 0 3547.38,1749.03 Z" fill="#E8B600" stroke="#E8B600" stroke-width="0.6"/>
<path d="M3547.22,1655.13 A236,236 0 0 1 3553.79,1654.74 L3558.04,1748.15 A142.5,142.5 0 0 0 3554.06,1748.38 Z" fill="#118DFF" stroke="#118DFF" stroke-width="0.6"/>
<path d="M3553.79,1654.74 A236,236 0 0 1 3558.32,1654.58 L3560.77,1748.05 A142.5,142.5 0 0 0 3558.04,1748.15 Z" fill="#8350C8" stroke="#8350C8" stroke-width="0.6"/>
<path d="M3558.32,1654.58 A236,236 0 0 1 3564.50,1654.50 L3564.50,1748.00 A142.5,142.5 0 0 0 3560.77,1748.05 Z" fill="#7F007F" stroke="#7F007F" stroke-width="0.6"/>
<polyline points="3499.0,1625.8 3536.3,1625.8 3541.6,1652.0" fill="none" stroke="#a6a6a6" stroke-width="2.6"/>
<polyline points="3333.3,1704.4 3370.6,1704.4 3392.2,1724.1" fill="none" stroke="#a6a6a6" stroke-width="2.6"/>
<polyline points="3747.9,2115.8 3709.9,2115.8 3695.5,2094.2" fill="none" stroke="#a6a6a6" stroke-width="2.6"/>
<circle cx="3960.8" cy="1656.3" r="16.8" fill="#FF3FA8"/>
<circle cx="3960.8" cy="1732.1" r="16.8" fill="#FF6B2C"/>
<circle cx="3960.8" cy="1807.9" r="16.8" fill="#F5404B"/>
<circle cx="3960.8" cy="1883.7" r="16.8" fill="#001FA3"/>
<circle cx="3960.8" cy="1959.5" r="16.8" fill="#E8B600"/>
<circle cx="3960.8" cy="2035.3" r="16.8" fill="#118DFF"/>
<circle cx="3960.8" cy="2111.1" r="16.8" fill="#8350C8"/>
<circle cx="3960.8" cy="2186.9" r="16.8" fill="#7F007F"/>
<polygon points="4069.7,50.4 4088.4,50.4 4088.4,178.1 4069.7,178.1 4069.7,70.8 4051.6,81.2 4049,64.6" fill="#1f1d1c"/>
<!--DIGITS-->
</svg>
<div class="r" style="left:21.5px;top:343.3px;width:3142.5px;height:3.9px;background:#2b2b2b;"></div>
<div class="r" style="left:1983.6px;top:343.3px;width:3.6px;height:1916.7px;background:#5f5f5f;"></div>
<div class="r" style="left:1987.2px;top:347.2px;width:3.6px;height:1912.8px;background:#c6c6c6;"></div>
<div class="r" style="left:1990.8px;top:343.3px;width:4.3px;height:1916.7px;background:#1c1c1c;"></div>
<div class="r" style="left:2574.6px;top:345.0px;width:5.0px;height:1055.0px;background:#111;"></div>
<div class="r" style="left:3161.3px;top:343.3px;width:5.4px;height:1916.7px;background:#222;"></div>
<div class="r" style="left:3163.0px;top:597.5px;width:1108.0px;height:4.0px;background:#222;"></div>
<div class="r" style="left:21.5px;top:1396.7px;width:3141.5px;height:3.9px;background:#5a5a5a;"></div>
<div class="r" style="left:21.5px;top:1400.6px;width:3141.5px;height:2.7px;background:#bdbdbd;"></div>
<div class="r" style="left:21.5px;top:1403.3px;width:3141.5px;height:4.3px;background:#1c1c1c;"></div>
<div class="r" style="left:3163.0px;top:1397.0px;width:1109.0px;height:3.3px;background:#b5b5b5;"></div>
<div class="r" style="left:3163.0px;top:1400.3px;width:1109.0px;height:2.7px;background:#6a6a6a;"></div>
<div class="r" style="left:3163.0px;top:1403.0px;width:1109.0px;height:4.4px;background:#000;"></div>
<span class="t" style="top:70.9px;font-size:52.5px;color:#141414;font-weight:700;left:33.0px;transform-origin:0 50%;transform:scaleX(1.0031);">AI Applications in Stroke Rehabilitation and Recovery of Adults</span>
<span class="t" style="top:136.1px;font-size:44.5px;color:#0091FF;font-weight:700;left:33.0px;transform-origin:0 50%;transform:scaleX(0.9829);">Overview of the selected papers</span>
<span class="t" style="top:34.4px;font-size:45px;color:#252423;left:1902.8px;transform-origin:0 50%;transform:scaleX(1.0338);">TopicName</span>
<span class="t" style="top:34.4px;font-size:45px;color:#252423;left:2624.1px;transform-origin:0 50%;transform:scaleX(1.0494);">Period</span>
<div class="r" style="left:1891.2px;top:105.4px;width:649.8px;height:83.8px;border:3.5px solid #e9e9e9;"></div>
<div class="r" style="left:2613.2px;top:105.4px;width:820.8px;height:83.8px;border:3.5px solid #e9e9e9;"></div>
<span class="t" style="top:133.4px;font-size:45px;color:#605E5C;left:1912.2px;transform-origin:0 50%;transform:scaleX(0.9598);">All</span>
<span class="t" style="top:133.9px;font-size:44px;color:#605E5C;left:2633.5px;transform-origin:0 50%;transform:scaleX(0.9422);">2019_2023</span>
<span class="t" style="top:228.1px;font-size:53.5px;color:#605E5C;left:3834.4px;transform-origin:0 50%;transform:scaleX(0.9761);">Total papers</span>
<span class="t" style="top:356.1px;font-size:55.5px;color:#1f1f1f;left:37.3px;transform-origin:0 50%;transform:scaleX(1.0116);">AI techniques over time</span>
<span class="t" style="top:435.4px;font-size:36px;color:#3b3a39;font-weight:700;left:36.5px;transform-origin:0 50%;">AIMainCategory</span>
<span class="t" style="top:500.5px;font-size:36px;color:#605E5C;left:76.7px;transform-origin:0 50%;transform:scaleX(0.9208);">(Blank)</span>
<span class="t" style="top:576.2px;font-size:36px;color:#605E5C;left:76.7px;transform-origin:0 50%;transform:scaleX(0.9964);">Artificial Intelligence</span>
<span class="t" style="top:651.9px;font-size:36px;color:#605E5C;left:76.7px;transform-origin:0 50%;transform:scaleX(0.9832);">Computer Vision</span>
<span class="t" style="top:727.6px;font-size:36px;color:#605E5C;left:76.7px;transform-origin:0 50%;transform:scaleX(0.9784);">Conceptualisation</span>
<span class="t" style="top:803.3px;font-size:36px;color:#605E5C;left:76.7px;transform-origin:0 50%;transform:scaleX(0.9586);">Deep Learning</span>
<span class="t" style="top:879.0px;font-size:36px;color:#605E5C;left:76.7px;transform-origin:0 50%;transform:scaleX(0.9953);">Evolutionary Algorithms</span>
<span class="t" style="top:954.7px;font-size:36px;color:#605E5C;left:76.7px;transform-origin:0 50%;transform:scaleX(0.9303);">Expert Systems</span>
<span class="t" style="top:1030.4px;font-size:36px;color:#605E5C;left:76.7px;transform-origin:0 50%;transform:scaleX(0.9345);">Fuzzy Logic</span>
<span class="t" style="top:1106.1px;font-size:36px;color:#605E5C;left:76.7px;transform-origin:0 50%;transform:scaleX(0.9924);">Internet of Things</span>
<span class="t" style="top:1181.8px;font-size:36px;color:#605E5C;left:76.7px;transform-origin:0 50%;transform:scaleX(0.9693);">Machine Learning</span>
<span class="t" style="top:1257.5px;font-size:36px;color:#605E5C;left:76.7px;transform-origin:0 50%;transform:scaleX(0.9605);">Natural Language Processing</span>
<span class="t" style="top:1280.2px;font-size:40px;color:#605E5C;left:700.3px;transform-origin:50% 50%;transform:translateX(-50%) scaleX(0.9552);">2019</span>
<span class="t" style="top:1280.2px;font-size:40px;color:#605E5C;left:991.0px;transform-origin:50% 50%;transform:translateX(-50%) scaleX(0.9552);">2020</span>
<span class="t" style="top:1280.2px;font-size:40px;color:#605E5C;left:1280.9px;transform-origin:50% 50%;transform:translateX(-50%) scaleX(0.9552);">2021</span>
<span class="t" style="top:1280.2px;font-size:40px;color:#605E5C;left:1570.7px;transform-origin:50% 50%;transform:translateX(-50%) scaleX(0.9552);">2022</span>
<span class="t" style="top:1280.2px;font-size:40px;color:#605E5C;left:1861.2px;transform-origin:50% 50%;transform:translateX(-50%) scaleX(0.9552);">2023</span>
<span class="t" style="top:1339.9px;font-size:41px;color:#3a3a3a;font-weight:700;left:1280.9px;transform-origin:50% 50%;transform:translateX(-50%) scaleX(1.0618);">Year</span>
<span class="t" style="top:376.6px;font-size:44px;color:#252423;left:2031.0px;transform-origin:0 50%;">AIMainCategory</span>
<div class="r" style="left:2014.5px;top:452.8px;width:516.2px;height:3.8px;background:#1CA9F2;"></div>
<div class="r" style="left:0;top:0;width:4291px;height:1388px;overflow:hidden;background:none;">
<div class="r" style="left:2014.5px;top:519.5px;width:516.2px;height:68.9px;background:#ededed;"></div>
<span class="t" style="top:534.9px;font-size:44px;color:#252423;left:2031.0px;transform-origin:0 50%;transform:scaleX(1.0171);">Artificial Intelligence</span>
<span class="t" style="top:601.7px;font-size:44px;color:#252423;left:2031.0px;transform-origin:0 50%;transform:scaleX(1.0100);">Computer Vision</span>
<div class="r" style="left:2014.5px;top:653.2px;width:516.2px;height:68.9px;background:#ededed;"></div>
<span class="t" style="top:668.6px;font-size:44px;color:#252423;left:2031.0px;transform-origin:0 50%;transform:scaleX(1.0020);">Conceptualisation</span>
<span class="t" style="top:735.4px;font-size:44px;color:#252423;left:2031.0px;transform-origin:0 50%;transform:scaleX(0.9811);">Deep Learning</span>
<div class="r" style="left:2014.5px;top:786.9px;width:516.2px;height:68.9px;background:#ededed;"></div>
<span class="t" style="top:802.3px;font-size:44px;color:#252423;left:2031.0px;transform-origin:0 50%;transform:scaleX(1.0199);">Evolutionary Algorithms</span>
<span class="t" style="top:869.1px;font-size:44px;color:#252423;left:2031.0px;transform-origin:0 50%;transform:scaleX(0.9501);">Expert Systems</span>
<div class="r" style="left:2014.5px;top:920.6px;width:516.2px;height:68.9px;background:#ededed;"></div>
<span class="t" style="top:936.0px;font-size:44px;color:#252423;left:2031.0px;transform-origin:0 50%;transform:scaleX(0.9584);">Fuzzy Logic</span>
<span class="t" style="top:1002.8px;font-size:44px;color:#252423;left:2031.0px;transform-origin:0 50%;transform:scaleX(1.0187);">Internet of Things</span>
<div class="r" style="left:2014.5px;top:1054.3px;width:516.2px;height:68.8px;background:#ededed;"></div>
<span class="t" style="top:1069.7px;font-size:44px;color:#252423;left:2031.0px;transform-origin:0 50%;transform:scaleX(0.9949);">Machine Learning</span>
<span class="t" style="top:1136.5px;font-size:44px;color:#252423;left:2031.0px;transform-origin:0 50%;transform:scaleX(0.9948);">Natural Language</span>
<span class="t" style="top:1192.0px;font-size:44px;color:#252423;left:2031.0px;transform-origin:0 50%;transform:scaleX(0.9575);">Processing</span>
<div class="r" style="left:2014.5px;top:1243.9px;width:516.2px;height:68.8px;background:#ededed;"></div>
<span class="t" style="top:1259.2px;font-size:44px;color:#252423;left:2031.0px;transform-origin:0 50%;transform:scaleX(1.0117);">Neural Networks</span>
<span class="t" style="top:1326.1px;font-size:44px;color:#252423;left:2031.0px;transform-origin:0 50%;transform:scaleX(1.0362);">Optimization</span>
<div class="r" style="left:2014.5px;top:1377.5px;width:516.2px;height:67.3px;background:#ededed;"></div>
</div>
<div class="r" style="left:2538.7px;top:367px;width:19.0px;height:625.6px;background:#a9a9a9;border-radius:9.5px;"></div>
<span class="t" style="top:376.6px;font-size:44px;color:#252423;left:2617.4px;transform-origin:0 50%;transform:scaleX(0.9792);">AISubCategory</span>
<div class="r" style="left:2600.8px;top:452.8px;width:516.2px;height:3.8px;background:#1CA9F2;"></div>
<div class="r" style="left:0;top:0;width:4291px;height:1388px;overflow:hidden;background:none;">
<div class="r" style="left:2600.8px;top:519.5px;width:516.2px;height:68.9px;background:#ededed;"></div>
<span class="t" style="top:534.9px;font-size:44px;color:#252423;left:2617.4px;transform-origin:0 50%;transform:scaleX(1.0194);">Artificial Intelligence</span>
<span class="t" style="top:601.7px;font-size:44px;color:#252423;left:2617.4px;transform-origin:0 50%;transform:scaleX(0.9682);">Association Rules</span>
<div class="r" style="left:2600.8px;top:653.2px;width:516.2px;height:68.9px;background:#ededed;"></div>
<span class="t" style="top:668.6px;font-size:44px;color:#252423;left:2617.4px;transform-origin:0 50%;transform:scaleX(0.9929);">Chat bots</span>
<span class="t" style="top:735.4px;font-size:44px;color:#252423;left:2617.4px;transform-origin:0 50%;transform:scaleX(0.9757);">Classification</span>
<div class="r" style="left:2600.8px;top:786.9px;width:516.2px;height:68.9px;background:#ededed;"></div>
<span class="t" style="top:802.3px;font-size:44px;color:#252423;left:2617.4px;transform-origin:0 50%;transform:scaleX(0.9920);">Clustering</span>
<span class="t" style="top:869.1px;font-size:44px;color:#252423;left:2617.4px;transform-origin:0 50%;transform:scaleX(1.0100);">Computer Vision</span>
<div class="r" style="left:2600.8px;top:920.6px;width:516.2px;height:68.9px;background:#ededed;"></div>
<span class="t" style="top:936.0px;font-size:44px;color:#252423;left:2617.4px;transform-origin:0 50%;transform:scaleX(1.0077);">Conversational Agent</span>
<span class="t" style="top:1002.8px;font-size:44px;color:#252423;left:2617.4px;transform-origin:0 50%;transform:scaleX(1.0222);">Data Mining</span>
<div class="r" style="left:2600.8px;top:1054.3px;width:516.2px;height:68.8px;background:#ededed;"></div>
<span class="t" style="top:1069.7px;font-size:44px;color:#252423;left:2617.4px;transform-origin:0 50%;transform:scaleX(0.9838);">Deep Learning</span>
<span class="t" style="top:1136.5px;font-size:44px;color:#252423;left:2617.4px;transform-origin:0 50%;transform:scaleX(1.0129);">Dimensionality</span>
<span class="t" style="top:1192.0px;font-size:44px;color:#252423;left:2617.4px;transform-origin:0 50%;transform:scaleX(0.9918);">Reduction</span>
<div class="r" style="left:2600.8px;top:1243.9px;width:516.2px;height:68.8px;background:#ededed;"></div>
<span class="t" style="top:1259.2px;font-size:44px;color:#252423;left:2617.4px;transform-origin:0 50%;transform:scaleX(0.9706);">Ensemble Learning</span>
<span class="t" style="top:1326.1px;font-size:44px;color:#252423;left:2617.4px;transform-origin:0 50%;transform:scaleX(1.0199);">Evolutionary Algorithms</span>
<div class="r" style="left:2600.8px;top:1377.5px;width:516.2px;height:67.3px;background:#ededed;"></div>
</div>
<div class="r" style="left:3125px;top:367px;width:19px;height:382px;background:#a9a9a9;border-radius:9.5px;"></div>
<div class="r" style="left:3195px;top:376.6px;width:1053.5px;height:77px;border:4.5px solid #ececec;"></div>
<span class="t" style="top:406.2px;font-size:36px;color:#a8a8a8;left:3216.9px;transform-origin:0 50%;transform:scaleX(0.9118);">Search</span>
<span class="t" style="top:610.4px;font-size:55.5px;color:#1f1f1f;left:3185.6px;transform-origin:0 50%;transform:scaleX(0.9963);">AI category</span>
<span class="t" style="top:761.7px;font-size:37px;color:#605E5C;left:3209.4px;transform-origin:0 50%;transform:scaleX(1.0069);">Exper... 0.21%</span>
<span class="t" style="top:819.1px;font-size:37px;color:#605E5C;left:3213.4px;transform-origin:0 50%;transform:scaleX(0.9804);">N... 0....</span>
<span class="t" style="top:874.4px;font-size:37px;color:#605E5C;left:3202.0px;transform-origin:0 50%;transform:scaleX(0.9210);">S... ...</span>
<span class="t" style="top:1146.4px;font-size:37px;color:#605E5C;left:3293.5px;transform-origin:100% 50%;transform:translateX(-100%) scaleX(0.9624);">Rob...</span>
<span class="t" style="top:1198.3px;font-size:37px;color:#605E5C;left:3293.5px;transform-origin:100% 50%;transform:translateX(-100%) scaleX(0.9481);">5.6...</span>
<span class="t" style="top:1254.2px;font-size:37px;color:#605E5C;left:3490.3px;transform-origin:100% 50%;transform:translateX(-100%) scaleX(1.0507);">Conceptualisati...</span>
<span class="t" style="top:1307.1px;font-size:37px;color:#605E5C;left:3490.3px;transform-origin:100% 50%;transform:translateX(-100%) scaleX(0.9913);">6.65%</span>
<span class="t" style="top:1251.2px;font-size:37px;color:#605E5C;left:3666.8px;transform-origin:0 50%;transform:scaleX(1.0667);">Neural Netwo...</span>
<span class="t" style="top:1304.6px;font-size:37px;color:#605E5C;left:3666.8px;transform-origin:0 50%;transform:scaleX(0.9913);">9.56%</span>
<span class="t" style="top:778.0px;font-size:37px;color:#605E5C;left:3773.0px;transform-origin:0 50%;transform:scaleX(1.0045);">Supervi...</span>
<span class="t" style="top:833.9px;font-size:37px;color:#605E5C;left:3773.0px;transform-origin:0 50%;transform:scaleX(1.0041);">39.92%</span>
<span class="t" style="top:691.7px;font-size:36px;color:#3b3a39;font-weight:700;left:3944.3px;transform-origin:0 50%;transform:scaleX(1.0024);">AIMainCategory</span>
<span class="t" style="top:754.7px;font-size:36px;color:#605E5C;left:3986.7px;transform-origin:0 50%;transform:scaleX(0.9187);">Supervised Le...</span>
<span class="t" style="top:830.4px;font-size:36px;color:#605E5C;left:3986.7px;transform-origin:0 50%;transform:scaleX(0.9802);">Neural Networ...</span>
<span class="t" style="top:906.1px;font-size:36px;color:#605E5C;left:3986.7px;transform-origin:0 50%;transform:scaleX(0.9452);">Conceptualisa...</span>
<span class="t" style="top:981.8px;font-size:36px;color:#605E5C;left:3986.7px;transform-origin:0 50%;transform:scaleX(0.9208);">(Blank)</span>
<span class="t" style="top:1057.5px;font-size:36px;color:#605E5C;left:3986.7px;transform-origin:0 50%;transform:scaleX(0.9237);">Robotics;Supe...</span>
<span class="t" style="top:1133.2px;font-size:36px;color:#605E5C;left:3986.7px;transform-origin:0 50%;transform:scaleX(0.9496);">Robotics</span>
<span class="t" style="top:1208.9px;font-size:36px;color:#605E5C;left:3986.7px;transform-origin:0 50%;transform:scaleX(0.9187);">Supervised Le...</span>
<span class="t" style="top:1284.6px;font-size:36px;color:#605E5C;left:3986.7px;transform-origin:0 50%;transform:scaleX(0.9380);">Unsupervised ...</span>
<span class="t" style="top:1436.3px;font-size:44px;color:#252423;left:57.2px;transform-origin:0 50%;transform:scaleX(1.0026);">Title</span>
<span class="t" style="top:1436.3px;font-size:44px;color:#252423;left:1359.9px;transform-origin:0 50%;transform:scaleX(1.0139);">CitationCount</span>
<span class="t" style="top:1436.3px;font-size:44px;color:#252423;left:1670.8px;transform-origin:0 50%;transform:scaleX(0.8954);">Year</span>
<div class="r" style="left:1869.8px;top:1420px;width:73.8px;height:80px;overflow:hidden;background:none;"><span class="t" style="left:0;top:16.3px;font-size:44px;color:#252423;">ArticleInfluence</span></div>
<div class="r" style="left:39.4px;top:1512.4px;width:1905.0px;height:4.2px;background:#1CA9F2;"></div>
<div class="r" style="left:1947.3px;top:1427px;width:21px;height:25.6px;background:#b3b0ad;border-radius:50%;"></div>
<div class="r" style="left:0;top:0;width:1944.6px;height:2207.4px;overflow:hidden;background:none;">
<span class="t" style="top:1529.4px;font-size:36px;color:#252423;text-decoration:underline;text-decoration-thickness:3px;text-underline-offset:6px;text-decoration-color:#4a4a4a;left:57.2px;transform-origin:0 50%;transform:scaleX(0.9865);">Principles of Neurorehabilitation After Stroke Based on Motor Learning and Brain</span>
<span class="t" style="top:1579.2px;font-size:36px;color:#252423;text-decoration:underline;text-decoration-thickness:3px;text-underline-offset:6px;text-decoration-color:#4a4a4a;left:57.2px;transform-origin:0 50%;transform:scaleX(0.9566);">Plasticity Mechanisms.</span>
<span class="t" style="top:1529.4px;font-size:36px;color:#252423;left:1636.0px;transform-origin:100% 50%;transform:translateX(-100%) scaleX(0.9400);">314</span>
<span class="t" style="top:1529.4px;font-size:36px;color:#252423;left:1836.8px;transform-origin:100% 50%;transform:translateX(-100%) scaleX(0.9690);">2019</span>
<span class="t" style="top:1529.4px;font-size:36px;color:#252423;left:1869.8px;transform-origin:0 50%;transform:scaleX(0.9400);">52.33</span>
<div class="r" style="left:39.4px;top:1623.0px;width:1905.0px;height:114.4px;background:#ededed;"></div>
<span class="t" style="top:1641.4px;font-size:36px;color:#252423;text-decoration:underline;text-decoration-thickness:3px;text-underline-offset:6px;text-decoration-color:#4a4a4a;left:57.2px;transform-origin:0 50%;transform:scaleX(0.9714);">Neuroprosthesis for Decoding Speech in a Paralyzed Person with Anarthria.</span>
<span class="t" style="top:1641.4px;font-size:36px;color:#252423;left:1636.0px;transform-origin:100% 50%;transform:translateX(-100%) scaleX(0.9400);">295</span>
<span class="t" style="top:1641.4px;font-size:36px;color:#252423;left:1836.8px;transform-origin:100% 50%;transform:translateX(-100%) scaleX(0.9690);">2021</span>
<span class="t" style="top:1641.4px;font-size:36px;color:#252423;left:1869.8px;transform-origin:0 50%;transform:scaleX(0.9400);">73.75</span>
<span class="t" style="top:1751.3px;font-size:36px;color:#252423;text-decoration:underline;text-decoration-thickness:3px;text-underline-offset:6px;text-decoration-color:#4a4a4a;left:57.2px;transform-origin:0 50%;transform:scaleX(0.9695);">A Survey of Robots in Healthcare</span>
<span class="t" style="top:1751.3px;font-size:36px;color:#252423;left:1636.0px;transform-origin:100% 50%;transform:translateX(-100%) scaleX(0.9400);">230</span>
<span class="t" style="top:1751.3px;font-size:36px;color:#252423;left:1836.8px;transform-origin:100% 50%;transform:translateX(-100%) scaleX(0.9690);">2021</span>
<span class="t" style="top:1751.3px;font-size:36px;color:#252423;left:1869.8px;transform-origin:0 50%;transform:scaleX(0.9400);">57.5</span>
<div class="r" style="left:39.4px;top:1794.2px;width:1905.0px;height:113.2px;background:#ededed;"></div>
<span class="t" style="top:1811.4px;font-size:36px;color:#252423;text-decoration:underline;text-decoration-thickness:3px;text-underline-offset:6px;text-decoration-color:#4a4a4a;left:57.2px;transform-origin:0 50%;transform:scaleX(0.9960);">Opening the black box of artificial intelligence for clinical decision support: A</span>
<span class="t" style="top:1861.1px;font-size:36px;color:#252423;text-decoration:underline;text-decoration-thickness:3px;text-underline-offset:6px;text-decoration-color:#4a4a4a;left:57.2px;transform-origin:0 50%;transform:scaleX(0.9976);">study predicting stroke outcome.</span>
<span class="t" style="top:1811.4px;font-size:36px;color:#252423;left:1636.0px;transform-origin:100% 50%;transform:translateX(-100%) scaleX(0.9400);">141</span>
<span class="t" style="top:1811.4px;font-size:36px;color:#252423;left:1836.8px;transform-origin:100% 50%;transform:translateX(-100%) scaleX(0.9690);">2020</span>
<span class="t" style="top:1811.4px;font-size:36px;color:#252423;left:1869.8px;transform-origin:0 50%;transform:scaleX(0.9400);">28.2</span>
<span class="t" style="top:1920.7px;font-size:36px;color:#252423;text-decoration:underline;text-decoration-thickness:3px;text-underline-offset:6px;text-decoration-color:#4a4a4a;left:57.2px;transform-origin:0 50%;transform:scaleX(0.9752);">Development and Clinical Evaluation of a Web-Based Upper Limb Home</span>
<span class="t" style="top:1970.4px;font-size:36px;color:#252423;text-decoration:underline;text-decoration-thickness:3px;text-underline-offset:6px;text-decoration-color:#4a4a4a;left:57.2px;transform-origin:0 50%;transform:scaleX(0.9774);">Rehabilitation System Using a Smartwatch and Machine Learning Model for</span>
<span class="t" style="top:2020.9px;font-size:36px;color:#252423;text-decoration:underline;text-decoration-thickness:3px;text-underline-offset:6px;text-decoration-color:#4a4a4a;left:57.2px;transform-origin:0 50%;transform:scaleX(0.9598);">Chronic Stroke Survivors: Prospective Comparative Study</span>
<span class="t" style="top:1920.7px;font-size:36px;color:#252423;left:1636.0px;transform-origin:100% 50%;transform:translateX(-100%) scaleX(0.9400);">136</span>
<span class="t" style="top:1920.7px;font-size:36px;color:#252423;left:1836.8px;transform-origin:100% 50%;transform:translateX(-100%) scaleX(0.9690);">2020</span>
<span class="t" style="top:1920.7px;font-size:36px;color:#252423;left:1869.8px;transform-origin:0 50%;transform:scaleX(0.9400);">27.2</span>
<div class="r" style="left:39.4px;top:2065.0px;width:1905.0px;height:114.5px;background:#ededed;"></div>
<span class="t" style="top:2080.7px;font-size:36px;color:#252423;text-decoration:underline;text-decoration-thickness:3px;text-underline-offset:6px;text-decoration-color:#4a4a4a;left:57.2px;transform-origin:0 50%;transform:scaleX(0.9766);">Rehab-Net: Deep Learning Framework for Arm Movement Classification Using</span>
<span class="t" style="top:2132.3px;font-size:36px;color:#252423;text-decoration:underline;text-decoration-thickness:3px;text-underline-offset:6px;text-decoration-color:#4a4a4a;left:57.2px;transform-origin:0 50%;transform:scaleX(0.9639);">Wearable Sensors for Stroke Rehabilitation</span>
<span class="t" style="top:2080.7px;font-size:36px;color:#252423;left:1636.0px;transform-origin:100% 50%;transform:translateX(-100%) scaleX(0.9400);">125</span>
<span class="t" style="top:2080.7px;font-size:36px;color:#252423;left:1836.8px;transform-origin:100% 50%;transform:translateX(-100%) scaleX(0.9690);">2019</span>
<span class="t" style="top:2080.7px;font-size:36px;color:#252423;left:1869.8px;transform-origin:0 50%;transform:scaleX(0.9400);">20.83</span>
<span class="t" style="top:2193.4px;font-size:36px;color:#252423;text-decoration:underline;text-decoration-thickness:3px;text-underline-offset:6px;text-decoration-color:#4a4a4a;left:57.2px;transform-origin:0 50%;transform:scaleX(0.9907);">Effects of robotic gait training after stroke: A meta-analysis</span>
<span class="t" style="top:2193.4px;font-size:36px;color:#252423;left:1636.0px;transform-origin:100% 50%;transform:translateX(-100%) scaleX(0.9400);">123</span>
<span class="t" style="top:2193.4px;font-size:36px;color:#252423;left:1836.8px;transform-origin:100% 50%;transform:translateX(-100%) scaleX(0.9690);">2020</span>
<span class="t" style="top:2193.4px;font-size:36px;color:#252423;left:1869.8px;transform-origin:0 50%;transform:scaleX(0.9400);">20.6</span>
</div>
<div class="r" style="left:39.4px;top:2206.8px;width:1905.0px;height:3.2px;background:#1CA9F2;"></div>
<span class="t" style="top:2221.6px;font-size:36px;color:#1a1a1a;font-weight:700;left:57.5px;transform-origin:0 50%;transform:scaleX(0.9637);">Total</span>
<span class="t" style="top:1413.1px;font-size:55.5px;color:#1f1f1f;left:2016.0px;transform-origin:0 50%;transform:scaleX(0.9503);">Topics</span>
<span class="t" style="top:1571.3px;font-size:37px;color:#605E5C;left:2533.8px;transform-origin:0 50%;transform:scaleX(1.0448);">76</span>
<span class="t" style="top:1627.0px;font-size:37px;color:#605E5C;left:2533.8px;transform-origin:0 50%;transform:scaleX(0.9865);">(15.8%)</span>
<span class="t" style="top:1746.3px;font-size:37px;color:#605E5C;left:2730.4px;transform-origin:0 50%;transform:scaleX(1.0035);">64</span>
<span class="t" style="top:1802.6px;font-size:37px;color:#605E5C;left:2730.4px;transform-origin:0 50%;transform:scaleX(0.9466);">(1...)</span>
<span class="t" style="top:2047.8px;font-size:37px;color:#605E5C;left:2669.5px;transform-origin:0 50%;transform:scaleX(1.0035);">52</span>
<span class="t" style="top:2102.2px;font-size:37px;color:#605E5C;left:2669.5px;transform-origin:0 50%;transform:scaleX(0.9663);">(10.8...)</span>
<span class="t" style="top:2157.9px;font-size:37px;color:#605E5C;left:2516.1px;transform-origin:0 50%;transform:scaleX(1.0034);">46 (9.56%)</span>
<span class="t" style="top:2157.9px;font-size:37px;color:#605E5C;left:2124.2px;transform-origin:0 50%;transform:scaleX(1.0028);">31 (6.44%)</span>
<span class="t" style="top:2100.9px;font-size:37px;color:#605E5C;left:2073.0px;transform-origin:0 50%;transform:scaleX(0.9690);">30 (...)</span>
<span class="t" style="top:1988.8px;font-size:37px;color:#605E5C;left:2106.5px;transform-origin:100% 50%;transform:translateX(-100%) scaleX(1.0035);">30</span>
<span class="t" style="top:2043.2px;font-size:37px;color:#605E5C;left:2106.5px;transform-origin:100% 50%;transform:translateX(-100%) scaleX(0.9497);">(6....)</span>
<span class="t" style="top:1788.9px;font-size:37px;color:#605E5C;left:2076.3px;transform-origin:100% 50%;transform:translateX(-100%) scaleX(1.0205);">26</span>
<span class="t" style="top:1846.6px;font-size:37px;color:#605E5C;left:2076.3px;transform-origin:100% 50%;transform:translateX(-100%) scaleX(0.9318);">(...)</span>
<span class="t" style="top:1674.2px;font-size:37px;color:#605E5C;left:2048.8px;transform-origin:0 50%;transform:scaleX(0.9811);">20 (...)</span>
<span class="t" style="top:1606.0px;font-size:37px;color:#605E5C;left:2106.5px;transform-origin:0 50%;transform:scaleX(0.9807);">14 (2.9...)</span>
<span class="t" style="top:1494.4px;font-size:44px;color:#3b3a39;font-weight:700;left:2809.0px;transform-origin:0 50%;transform:scaleX(0.9949);">TopicName</span>
<span class="t" style="top:1568.2px;font-size:43px;color:#605E5C;left:2853.0px;transform-origin:0 50%;">Functional i...</span>
<span class="t" style="top:1652.9px;font-size:43px;color:#605E5C;left:2853.0px;transform-origin:0 50%;">Brain comp...</span>
<span class="t" style="top:1737.6px;font-size:43px;color:#605E5C;left:2853.0px;transform-origin:0 50%;transform:scaleX(0.9953);">Gait and m...</span>
<span class="t" style="top:1822.3px;font-size:43px;color:#605E5C;left:2853.0px;transform-origin:0 50%;transform:scaleX(1.0306);">Outcome pr...</span>
<span class="t" style="top:1907.0px;font-size:43px;color:#605E5C;left:2853.0px;transform-origin:0 50%;transform:scaleX(0.9964);">Electromyo...</span>
<span class="t" style="top:1991.7px;font-size:43px;color:#605E5C;left:2853.0px;transform-origin:0 50%;transform:scaleX(0.9737);">Data analys...</span>
<span class="t" style="top:2076.4px;font-size:43px;color:#605E5C;left:2853.0px;transform-origin:0 50%;transform:scaleX(1.0152);">Medical im...</span>
<span class="t" style="top:2161.1px;font-size:43px;color:#605E5C;left:2853.0px;transform-origin:0 50%;transform:scaleX(0.9739);">Robot-assis...</span>
<span class="t" style="top:1413.1px;font-size:55.5px;color:#1f1f1f;left:3184.5px;transform-origin:0 50%;transform:scaleX(1.0153);">Publication types</span>
<span class="t" style="top:1584.3px;font-size:37px;color:#605E5C;left:3485.2px;transform-origin:100% 50%;transform:translateX(-100%) scaleX(0.9725);">Research</span>
<span class="t" style="top:1636.7px;font-size:37px;color:#605E5C;left:3485.2px;transform-origin:100% 50%;transform:translateX(-100%) scaleX(0.9932);">0.83%</span>
<span class="t" style="top:1662.9px;font-size:37px;color:#605E5C;left:3318.2px;transform-origin:100% 50%;transform:translateX(-100%) scaleX(1.0110);">Confe...</span>
<span class="t" style="top:1715.3px;font-size:37px;color:#605E5C;left:3318.2px;transform-origin:100% 50%;transform:translateX(-100%) scaleX(0.9808);">7.48%</span>
<span class="t" style="top:2071.0px;font-size:37px;color:#605E5C;left:3762.3px;transform-origin:0 50%;transform:scaleX(1.0082);">Journal ...</span>
<span class="t" style="top:2124.8px;font-size:37px;color:#605E5C;left:3762.3px;transform-origin:0 50%;">81.7%</span>
<span class="t" style="top:1571.7px;font-size:36px;color:#3b3a39;font-weight:700;left:3944.4px;transform-origin:0 50%;transform:scaleX(0.9608);">DocType</span>
<span class="t" style="top:1639.0px;font-size:36px;color:#605E5C;left:3986.4px;transform-origin:0 50%;transform:scaleX(0.9818);">Journal Article</span>
<span class="t" style="top:1714.8px;font-size:36px;color:#605E5C;left:3986.4px;transform-origin:0 50%;transform:scaleX(0.9254);">Conference Pa...</span>
<span class="t" style="top:1790.6px;font-size:36px;color:#605E5C;left:3986.4px;transform-origin:0 50%;transform:scaleX(0.9234);">Review</span>
<span class="t" style="top:1866.4px;font-size:36px;color:#605E5C;left:3986.4px;transform-origin:0 50%;transform:scaleX(0.9431);">Clinical Trial</span>
<span class="t" style="top:1942.2px;font-size:36px;color:#605E5C;left:3986.4px;transform-origin:0 50%;transform:scaleX(0.8892);">Research</span>
<span class="t" style="top:2018.0px;font-size:36px;color:#605E5C;left:3986.4px;transform-origin:0 50%;transform:scaleX(0.9631);">Book Chapter</span>
<span class="t" style="top:2093.8px;font-size:36px;color:#605E5C;left:3986.4px;transform-origin:0 50%;transform:scaleX(0.9758);">Preprint</span>
<span class="t" style="top:2169.6px;font-size:36px;color:#605E5C;left:3986.4px;transform-origin:0 50%;transform:scaleX(0.9677);">Equations &amp; F...</span>
<span class="t" style="left:3832.5px;top:21.0px;font-size:185.6px;color:#1f1d1c;transform-origin:0 50%;transform:scaleX(0.8794);">4</span>
<span class="t" style="left:3930.6px;top:21.0px;font-size:185.6px;color:#1f1d1c;transform-origin:0 50%;transform:scaleX(0.8822);">8</span>
</body></html>
